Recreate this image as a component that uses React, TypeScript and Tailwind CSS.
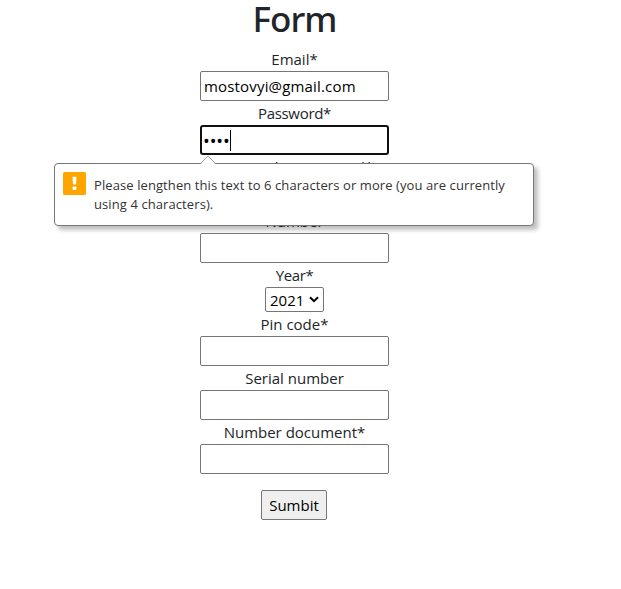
import type { ReactNode } from "react";

const inputBox =
  "flex h-[30px] w-[189px] items-center rounded-[2px] border border-[#767676] bg-white px-[3px] text-[15px] tracking-[0.17px] text-black";

function Label({ children, track = "" }: { children: ReactNode; track?: string }) {
  return <div className={`h-6 whitespace-nowrap text-[15px] leading-6 ${track}`}>{children}</div>;
}

function Tooltip() {
  return (
    <div className="absolute top-[38px] left-[-146px] z-10 flex h-[63px] w-[480px] rounded-[4px] border border-[#767676] bg-white pt-2 pl-2 text-[#333] shadow-[4px_4px_4px_rgba(0,0,0,0.25)]">
      <svg className="absolute -top-[9px] left-[145px]" width="17" height="10" viewBox="0 0 17 10">
        <path d="M0 10 L8 1 L16 10Z" fill="white" />
        <path d="M0.5 8.5 L8 1 L15.5 8.5" fill="none" stroke="#aaa" />
      </svg>
      <svg width="23" height="23" viewBox="0 0 23 23" className="shrink-0">
        <rect width="23" height="23" rx="1.5" fill="#ffa500" />
        <path d="M9.5 4.7H13.5L13 12.6H10Z" fill="white" />
        <rect x="9.6" y="14.4" width="3.8" height="3.6" rx="1" fill="white" />
      </svg>
      <div className="ml-2 pt-1 text-[13px] leading-[19px] tracking-[0.09px] whitespace-nowrap">
        <div>Please lengthen this text to 6 characters or more (you are currently</div>
        <div>using 4 characters).</div>
      </div>
    </div>
  );
}

export default function App() {
  return (
    <main className="flex h-[589px] w-[589px] flex-col items-center bg-white font-['Open_Sans','Noto_Sans',sans-serif] text-[#212529]">
      <h1 className="h-[47px] font-['Noto_Sans',sans-serif] text-[35px] leading-[37px] font-medium tracking-[-1px]">
        Form
      </h1>
      <Label>Email*</Label>
      <div className={inputBox}>mostovyi@gmail.com</div>
      <Label track="tracking-[-0.3px]">Password*</Label>
      <div className="relative">
        <div className="flex h-[30px] w-[189px] items-center rounded-[3px] border-2 border-[#101010] bg-white pl-[1px] text-black">
          <span className="pt-px text-[18px] leading-none tracking-[-0.1px]">••••</span>
          <span className="h-[21px] w-px bg-black" />
        </div>
        <Tooltip />
      </div>
      <Label track="tracking-[0.1px]">Repeat the password*</Label>
      <div className={inputBox} />
      <Label>Number</Label>
      <div className={inputBox} />
      <Label track="tracking-[-0.4px]">Year*</Label>
      <div className="flex h-[25px] w-[59px] items-center justify-between rounded-[2px] border border-[#767676] bg-white pt-px pr-[4px] pl-[4px] text-[15px] text-black">
        <span>2021</span>
        <svg width="10" height="7" viewBox="0 0 10 7" className="-mt-0.5">
          <path d="M1 1.2 L5 5.2 L9 1.2" fill="none" stroke="black" strokeWidth="2" />
        </svg>
      </div>
      <Label>Pin code*</Label>
      <div className={inputBox} />
      <Label>Serial number</Label>
      <div className={inputBox} />
      <Label>Number document*</Label>
      <div className={inputBox} />
      <button className="mt-4 -ml-px h-[30px] w-[66px] rounded-[2px] border border-[#767676] bg-[#efefef] text-[15px] text-black">
        Sumbit
      </button>
    </main>
  );
}
